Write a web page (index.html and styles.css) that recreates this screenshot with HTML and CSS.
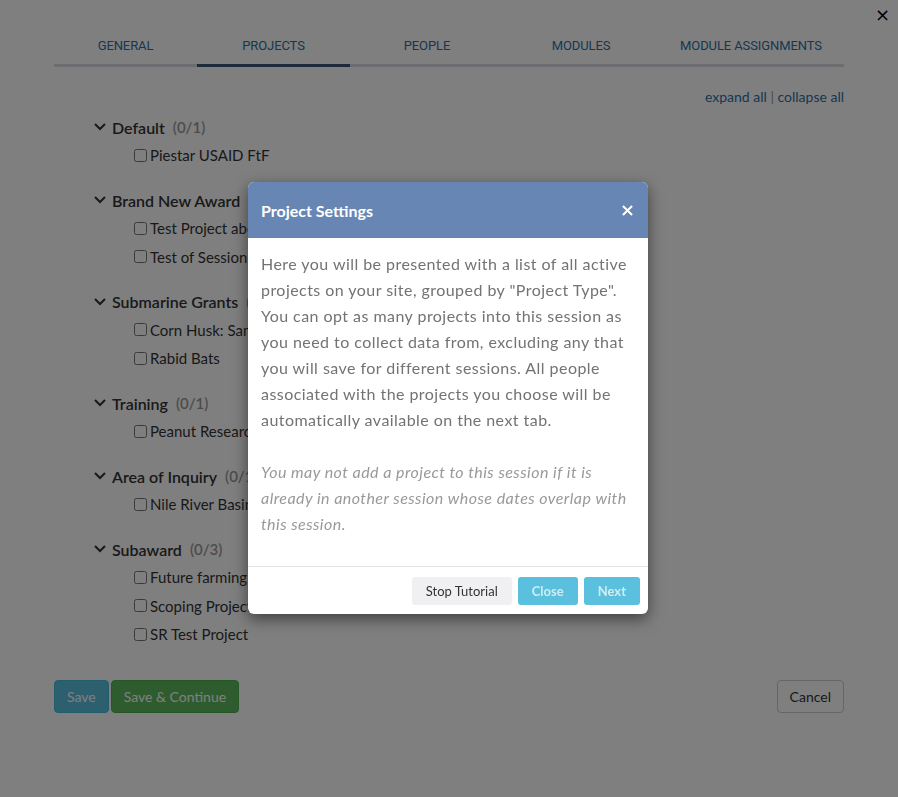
FILE: index.html
```html
<!doctype html>
<html lang="en">
    <head>
        <meta charset="UTF-8" />
        <meta name="viewport" content="width=device-width, initial-scale=1.0" />
        <title>Session Settings</title>
        <link rel="stylesheet" href="styles.css">
    </head>
    <body>
        <button class="page-close" type="button">&times;</button>
        <div class="page">
            <nav class="tabs">
                <a class="tab">General</a>
                <a class="tab tab--active">Projects</a>
                <a class="tab">People</a>
                <a class="tab">Modules</a>
                <a class="tab">Module Assignments</a>
            </nav>

            <div class="tree-tools">
                <a>expand all</a>
                <span class="tree-tools__sep">|</span>
                <a>collapse all</a>
            </div>

            <div class="tree">
                <div class="group">
                    <div class="group__title">
                        <svg class="chevron" viewBox="0 0 12 8"><polyline points="1,1 6,6 11,1" /></svg>
                        <span>Default</span><span class="group__count">(0/1)</span>
                    </div>
                    <label class="item"><input type="checkbox" /> Piestar USAID FtF</label>
                </div>
                <div class="group">
                    <div class="group__title">
                        <svg class="chevron" viewBox="0 0 12 8"><polyline points="1,1 6,6 11,1" /></svg>
                        <span>Brand New Award</span><span class="group__count">(0/2)</span>
                    </div>
                    <label class="item"><input type="checkbox" /> Test Project about nothing</label>
                    <label class="item"><input type="checkbox" /> Test of Session Dates</label>
                </div>
                <div class="group">
                    <div class="group__title">
                        <svg class="chevron" viewBox="0 0 12 8"><polyline points="1,1 6,6 11,1" /></svg>
                        <span>Submarine Grants</span><span class="group__count">(0/2)</span>
                    </div>
                    <label class="item"><input type="checkbox" /> Corn Husk: Sample Project</label>
                    <label class="item"><input type="checkbox" /> Rabid Bats</label>
                </div>
                <div class="group">
                    <div class="group__title">
                        <svg class="chevron" viewBox="0 0 12 8"><polyline points="1,1 6,6 11,1" /></svg>
                        <span>Training</span><span class="group__count">(0/1)</span>
                    </div>
                    <label class="item"><input type="checkbox" /> Peanut Research Project</label>
                </div>
                <div class="group">
                    <div class="group__title">
                        <svg class="chevron" viewBox="0 0 12 8"><polyline points="1,1 6,6 11,1" /></svg>
                        <span>Area of Inquiry</span><span class="group__count">(0/1)</span>
                    </div>
                    <label class="item"><input type="checkbox" /> Nile River Basin Study</label>
                </div>
                <div class="group">
                    <div class="group__title">
                        <svg class="chevron" viewBox="0 0 12 8"><polyline points="1,1 6,6 11,1" /></svg>
                        <span>Subaward</span><span class="group__count">(0/3)</span>
                    </div>
                    <label class="item"><input type="checkbox" /> Future farming initiative</label>
                    <label class="item"><input type="checkbox" /> Scoping Project</label>
                    <label class="item"><input type="checkbox" /> SR Test Project</label>
                </div>
            </div>

            <div class="actions">
                <div class="actions__left">
                    <button class="btn btn--info" disabled>Save</button>
                    <button class="btn btn--success" disabled>Save &amp; Continue</button>
                </div>
                <button class="btn btn--default">Cancel</button>
            </div>
        </div>

        <div class="backdrop"></div>

        <div class="tour">
            <div class="tour__header">
                <h3 class="tour__title">Project Settings</h3>
                <svg class="tour__close" viewBox="0 0 12 12"><path d="M1 1 L11 11 M11 1 L1 11" /></svg>
            </div>
            <div class="tour__body">
                <p>Here you will be presented with a list of all active projects on your site, grouped by "Project Type". You can opt as many projects into this session as you need to collect data from, excluding any that you will save for different sessions. All people associated with the projects you choose will be automatically available on the next tab.</p>
                <p class="tour__note">You may not add a project to this session if it is already in another session whose dates overlap with this session.</p>
            </div>
            <div class="tour__footer">
                <button class="tbtn tbtn--plain">Stop Tutorial</button>
                <button class="tbtn tbtn--info">Close</button>
                <button class="tbtn tbtn--info">Next</button>
            </div>
        </div>
    </body>
</html>
```

FILE: styles.css
```css
* {
    padding: 0;
    margin: 0;
    box-sizing: border-box;
}

body {
    font-family: "Lato", "Open Sans", sans-serif;
    background-color: #ffffff;
    color: #333333;
    height: 100vh;
    overflow: hidden;
}

.page-close {
    position: absolute;
    top: 6px;
    right: 8px;
    border: none;
    background: none;
    font-family: "DejaVu Sans", sans-serif;
    font-size: 18px;
    line-height: 18px;
    color: #000000;
}

.page {
    width: 790px;
    margin: 0 auto;
    padding-top: 38px;
}

/* tabs */

.tabs {
    display: grid;
    grid-template-columns: 143fr 153fr 154fr 154fr 186fr;
    border-bottom: 3px solid #d6dbe3;
}

.tab {
    font-family: "Roboto", sans-serif;
    font-size: 13px;
    text-transform: uppercase;
    letter-spacing: -0.1px;
    color: #2f6f9f;
    text-align: center;
    padding-bottom: 11px;
    margin-bottom: -3px;
    border-bottom: 3px solid transparent;
}

.tab--active {
    border-bottom-color: #3b5478;
}

.tree-tools {
    text-align: right;
    font-size: 14px;
    color: #2f6f9f;
    margin-top: 21px;
}

.tree-tools__sep {
    color: #999999;
}

/* project tree */

.tree {
    padding-left: 40px;
    margin-top: 8px;
}

.group {
    margin-bottom: 16.5px;
}

.group__title {
    display: flex;
    align-items: center;
    height: 28px;
    font-size: 16px;
    font-weight: 600;
    color: #333333;
}

.chevron {
    width: 12px;
    height: 8px;
    margin-right: 6px;
    fill: none;
    stroke: #333333;
    stroke-width: 2;
}

.group__count {
    font-size: 15px;
    font-weight: 600;
    color: #999999;
    margin-left: 8px;
}

.item {
    display: flex;
    align-items: center;
    height: 28.5px;
    padding-left: 40px;
    font-size: 15px;
    color: #333333;
    white-space: nowrap;
}

.item input {
    width: 13px;
    height: 13px;
    margin: 0 3px 0 0;
}

/* page actions */

.actions {
    display: flex;
    justify-content: space-between;
    margin-top: 31px;
}

.actions__left {
    display: flex;
    gap: 2px;
}

.btn {
    font-family: "Lato", sans-serif;
    font-size: 14px;
    height: 33px;
    padding: 0 12px;
    border-radius: 4px;
    border: 1px solid transparent;
}

.btn--info {
    background: #5bc0de;
    color: #ffffff;
    border-color: #46b8da;
}

.btn--success {
    background: #5cb85c;
    color: #ffffff;
    border-color: #4cae4c;
}

.btn--default {
    background: #ffffff;
    border-color: #cccccc;
    color: #333333;
}

.backdrop {
    position: fixed;
    inset: 0;
    background: rgba(0, 0, 0, 0.5);
}

/* tutorial popover */

.tour {
    position: absolute;
    top: 182px;
    left: 248px;
    width: 400px;
    background: #ffffff;
    border-radius: 6px;
    overflow: hidden;
    box-shadow: 0 5px 15px rgba(0, 0, 0, 0.5);
}

.tour__header {
    display: flex;
    align-items: center;
    justify-content: space-between;
    height: 56px;
    padding: 0 15px 0 13px;
    background: #6886b4;
    color: #ffffff;
}

.tour__title {
    font-size: 16px;
    font-weight: 700;
}

.tour__close {
    width: 11px;
    height: 11px;
    stroke: #ffffff;
    stroke-width: 2.2;
}

.tour__body {
    padding: 13px 13px 3px;
    font-size: 16px;
    line-height: 26px;
    letter-spacing: 0.45px;
    color: #737373;
}

.tour__body p {
    margin-bottom: 26px;
}

.tour__note {
    font-style: italic;
    color: #999999;
}

.tour__footer {
    display: flex;
    justify-content: flex-end;
    gap: 6px;
    padding: 10px 8px 9px;
    border-top: 1px solid #e5e5e5;
}

.tbtn {
    font-family: "Lato", sans-serif;
    font-size: 13px;
    height: 28px;
    padding: 0 14px;
    border: none;
    border-radius: 3px;
}

.tbtn--plain {
    background: #f0f0f2;
    color: #333333;
}

.tbtn--info {
    background: #5bc0de;
    font-weight: 700;
    color: rgba(255, 255, 255, 0.7);
}
```
